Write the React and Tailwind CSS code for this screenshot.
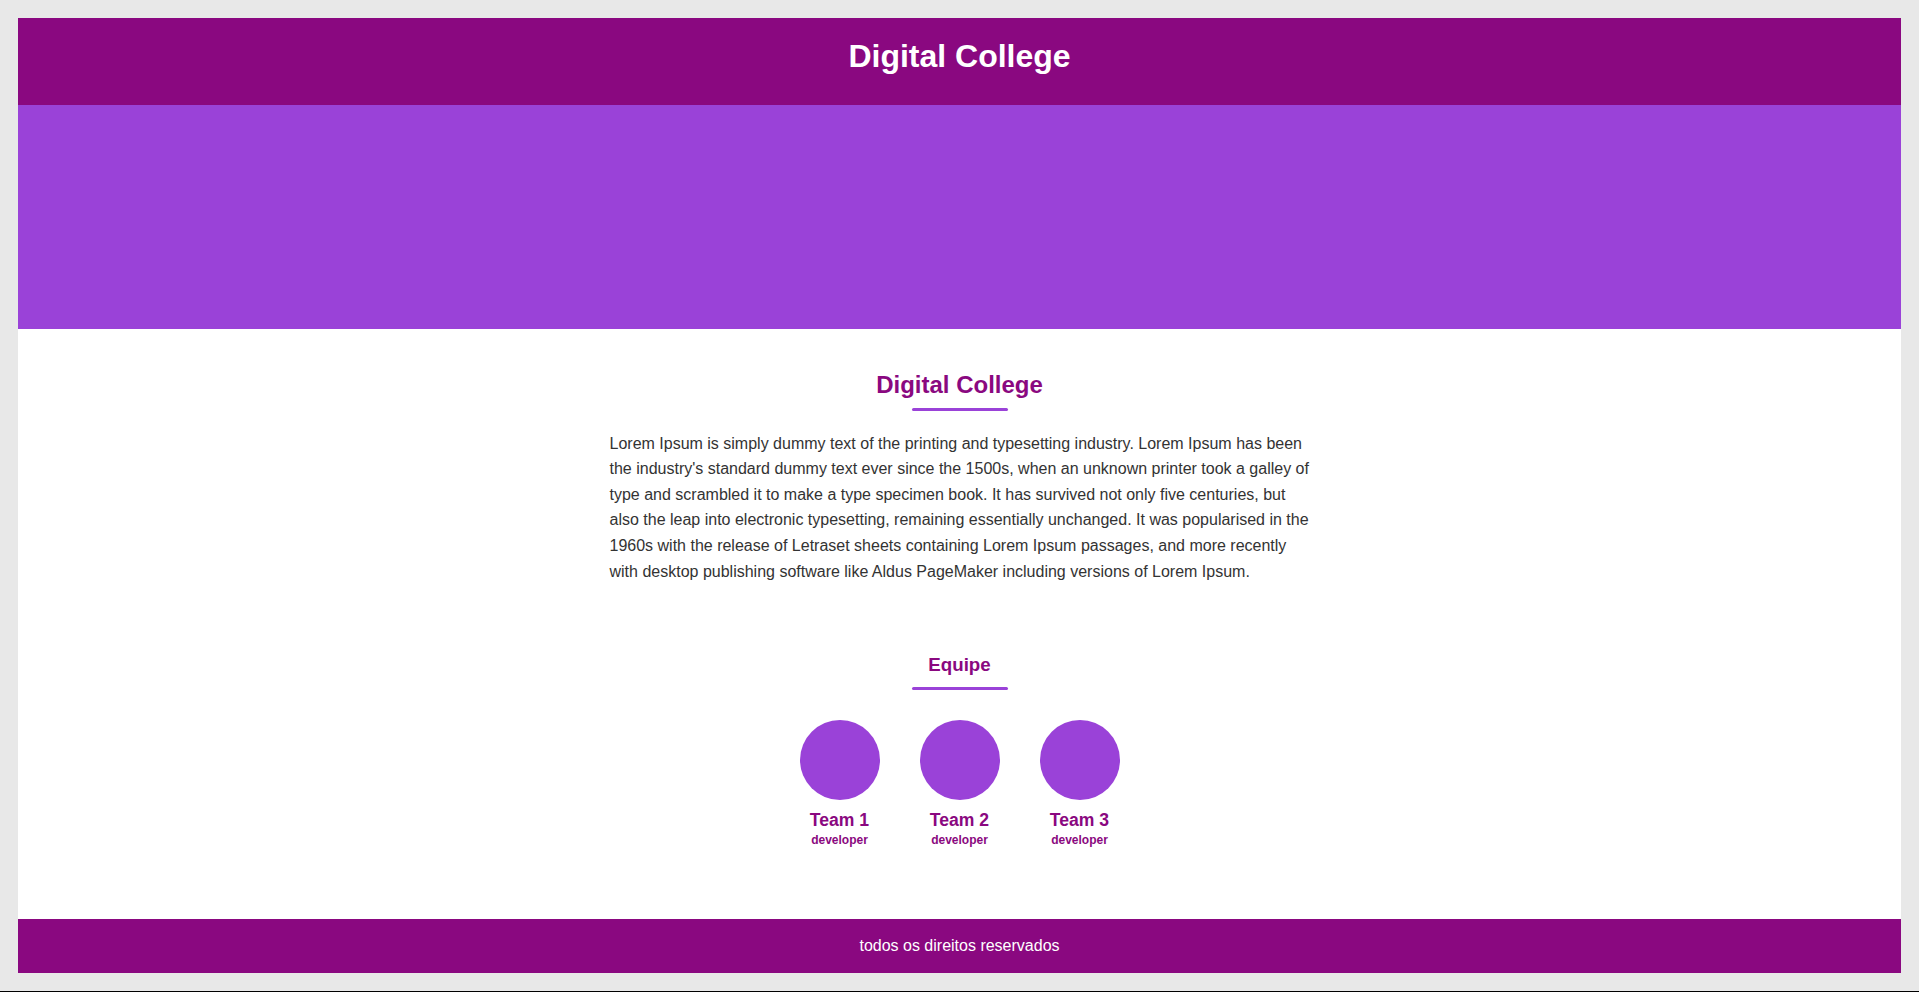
export default function App() {
  const team = ["Team 1", "Team 2", "Team 3"];
  return (
    <div className="min-h-screen bg-[#e8e8e8] px-[18px] pt-[18px] font-['Liberation_Sans',Arial,sans-serif] flex flex-col">
      <div className="flex flex-col bg-white">
        <header className="h-[87px] bg-[#8a0880] pt-[20px] flex justify-center">
          <h1 className="text-[32px] leading-[36.8px] font-bold text-white">Digital College</h1>
        </header>
        <div className="h-[224px] bg-[#9a42d8]" />
        <main className="h-[590px] flex flex-col items-center pt-[42px]">
          <h2 className="text-[24px] leading-[27.6px] font-bold text-[#8a0880]">Digital College</h2>
          <div className="mt-[9px] w-[96px] h-[3px] rounded-full bg-[#9a42d8]" />
          <p className="mt-[20px] w-[700px] text-[16px] leading-[25.6px] text-[#333333]">
            Lorem Ipsum is simply dummy text of the printing and typesetting industry. Lorem Ipsum has been the industry's standard dummy text ever since the 1500s, when an unknown printer took a galley of type and scrambled it to make a type specimen book. It has survived not only five centuries, but also the leap into electronic typesetting, remaining essentially unchanged. It was popularised in the 1960s with the release of Letraset sheets containing Lorem Ipsum passages, and more recently with desktop publishing software like Aldus PageMaker including versions of Lorem Ipsum.
          </p>
          <h3 className="mt-[70px] text-[18.72px] leading-[21.5px] font-bold text-[#8a0880]">Equipe</h3>
          <div className="mt-[11px] w-[96px] h-[3px] rounded-full bg-[#9a42d8]" />
          <div className="mt-[30px] flex gap-[40px]">
            {team.map((t) => (
              <div key={t} className="flex flex-col items-center w-[80px]">
                <div className="w-[80px] h-[80px] rounded-full bg-[#9a42d8]" />
                <div className="mt-[10px] text-[17.6px] leading-[20.5px] font-bold text-[#8a0880] whitespace-nowrap">{t}</div>
                <div className="mt-[3px] text-[12px] leading-[14px] font-bold text-[#8a0880]">developer</div>
              </div>
            ))}
          </div>
        </main>
        <footer className="h-[54px] bg-[#8a0880] flex items-center justify-center">
          <span className="text-[16px] leading-[18.4px] text-white">todos os direitos reservados</span>
        </footer>
      </div>
      <div className="h-[18px]" />
      <div className="h-[2px] bg-black -mx-[18px]" />
    </div>
  );
}
